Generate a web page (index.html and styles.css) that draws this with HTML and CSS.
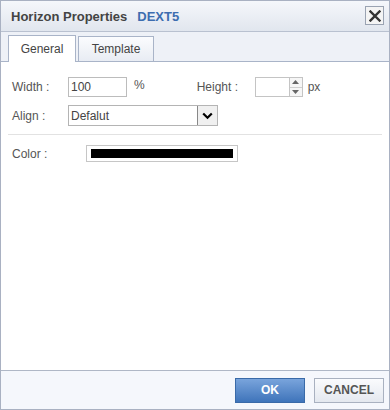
FILE: index.html
```html
<!DOCTYPE html>
<html lang="en">
<head>
    <meta charset="UTF-8">
    <title>Horizon Properties</title>
    <link rel="stylesheet" href="styles.css">
</head>
<body>
    <div class="dialog">
        <div class="titlebar">
            <span class="title">Horizon Properties</span>
            <span class="brand">DEXT5</span>
            <button class="close" title="Close">
                <svg width="12" height="12" viewBox="0 0 12 12"><path d="M1.5 1.5 L10.5 10.5 M10.5 1.5 L1.5 10.5" stroke="#333" stroke-width="2.4" stroke-linecap="square"/></svg>
            </button>
        </div>
        <div class="tabs">
            <div class="tab active">General</div>
            <div class="tab">Template</div>
        </div>
        <div class="content">
            <div class="row">
                <span class="label">Width :</span>
                <input class="text-input width-input" type="text" value="100">
                <span class="unit">%</span>
                <span class="label height-label">Height :</span>
                <div class="spinner">
                    <input class="spin-input" type="text" value="">
                    <div class="spin-buttons">
                        <span class="spin up"><svg width="7" height="4" viewBox="0 0 7 4"><path d="M0 4 L3.5 0 L7 4 Z" fill="#666"/></svg></span>
                        <span class="spin down"><svg width="7" height="4" viewBox="0 0 7 4"><path d="M0 0 L3.5 4 L7 0 Z" fill="#666"/></svg></span>
                    </div>
                </div>
                <span class="unit">px</span>
            </div>
            <div class="row">
                <span class="label">Align :</span>
                <div class="select">
                    <span class="select-text">Defalut</span>
                    <span class="select-btn"><svg width="11" height="8" viewBox="0 0 11 8"><path d="M1.2 1.5 L5.5 5.8 L9.8 1.5" fill="none" stroke="#000" stroke-width="2.2"/></svg></span>
                </div>
            </div>
            <div class="divider"></div>
            <div class="row color-row">
                <span class="label color-label">Color :</span>
                <div class="color-box"><div class="swatch"></div></div>
            </div>
        </div>
        <div class="footer">
            <button class="btn ok">OK</button>
            <button class="btn cancel">CANCEL</button>
        </div>
    </div>
</body>
</html>
```

FILE: styles.css
```css
* {
    box-sizing: border-box;
}
body {
    margin: 0;
    font-family: "Liberation Sans", Arial, sans-serif;
    font-size: 12px;
    color: #444;
    background: #fff;
}
.dialog {
    width: 390px;
    height: 410px;
    border: 1px solid #a9b1c2;
    display: flex;
    flex-direction: column;
    background: #fff;
}
.titlebar {
    height: 31px;
    flex: none;
    display: flex;
    align-items: center;
    padding: 0 5px 0 10px;
    background: linear-gradient(#f5f7fb, #e1e6ee);
    border-bottom: 1px solid #b9c1d0;
    font-weight: bold;
    font-size: 13px;
}
.title {
    color: #444;
}
.brand {
    color: #3d6db0;
    margin-left: 10px;
}
.close {
    margin-left: auto;
    width: 19px;
    height: 19px;
    padding: 0;
    border: 1px solid #9aa3b2;
    background: #f4f4f4;
    display: flex;
    align-items: center;
    justify-content: center;
    margin-top: -1px;
}
.tabs {
    height: 30px;
    flex: none;
    display: flex;
    align-items: flex-end;
    gap: 2px;
    padding-left: 7px;
    background: #eef1f7;
    border-bottom: 1px solid #a9b4c8;
}
.tab {
    height: 25px;
    padding: 0 12px;
    display: flex;
    align-items: center;
    border: 1px solid #a9b4c8;
    border-bottom: none;
    background: linear-gradient(#fbfcfe, #e8ecf3);
    color: #444;
    font-size: 12px;
}
.tab.active {
    height: 27px;
    margin-bottom: -1px;
    background: #fff;
    width: 68px;
    justify-content: center;
}
.tab:not(.active) {
    width: 76px;
    justify-content: center;
}
.content {
    flex: 1;
    padding: 15px 7px 0 7px;
}
.row {
    display: flex;
    align-items: center;
    padding-left: 4px;
    margin-bottom: 8px;
}
.label {
    width: 56px;
    color: #555;
}
.text-input {
    height: 20px;
    border: 1px solid #bcbcbc;
    padding: 0 2px;
    font-family: inherit;
    font-size: 12px;
    color: #444;
    outline: none;
}
.width-input {
    width: 59px;
}
.unit {
    margin-left: 7px;
    color: #555;
    margin-top: -4px;
}
.unit:last-child {
    margin-top: 0;
    margin-left: 5px;
}
.height-label {
    margin-left: 52px;
    width: 58px;
}
.spinner {
    display: flex;
    width: 48px;
    height: 20px;
    border: 1px solid #c4c4c4;
}
.spin-input {
    width: 33px;
    border: none;
    outline: none;
    padding: 0;
}
.spin-buttons {
    flex: 1;
    display: flex;
    flex-direction: column;
    border-left: 1px solid #c4c4c4;
}
.spin {
    flex: 1;
    display: flex;
    align-items: center;
    justify-content: center;
    background: #f6f6f6;
}
.spin.up {
    border-bottom: 1px solid #d0d0d0;
}
.select {
    width: 150px;
    height: 21px;
    display: flex;
    border: 1px solid #b4b4b4;
}
.select-text {
    flex: 1;
    padding-left: 2px;
    display: flex;
    align-items: center;
    color: #444;
}
.select-btn {
    width: 20px;
    display: flex;
    align-items: center;
    justify-content: center;
    border-left: 1px solid #888;
    background: #f0f0f0;
}
.divider {
    height: 1px;
    background: #e2e2e2;
    margin: 1px 0 10px;
}
.color-label {
    width: 74px;
}
.color-box {
    width: 152px;
    height: 17px;
    border: 1px solid #c6c6c6;
    padding: 3px 4px;
}
.swatch {
    height: 9px;
    background: #000;
}
.footer {
    height: 39px;
    flex: none;
    display: flex;
    align-items: center;
    justify-content: flex-end;
    gap: 9px;
    padding-right: 5px;
    background: #f5f7fc;
    border-top: 1px solid #afb7c6;
}
.btn {
    height: 25px;
    font-family: inherit;
    font-size: 12px;
    font-weight: bold;
    cursor: pointer;
}
.ok {
    width: 70px;
    border: 1px solid #3a6aa8;
    background: linear-gradient(#79a4dc, #3f74ba);
    color: #fff;
}
.cancel {
    width: 70px;
    border: 1px solid #a9b1c0;
    background: linear-gradient(#fafbfd, #e4e8ef);
    color: #555;
}
```
